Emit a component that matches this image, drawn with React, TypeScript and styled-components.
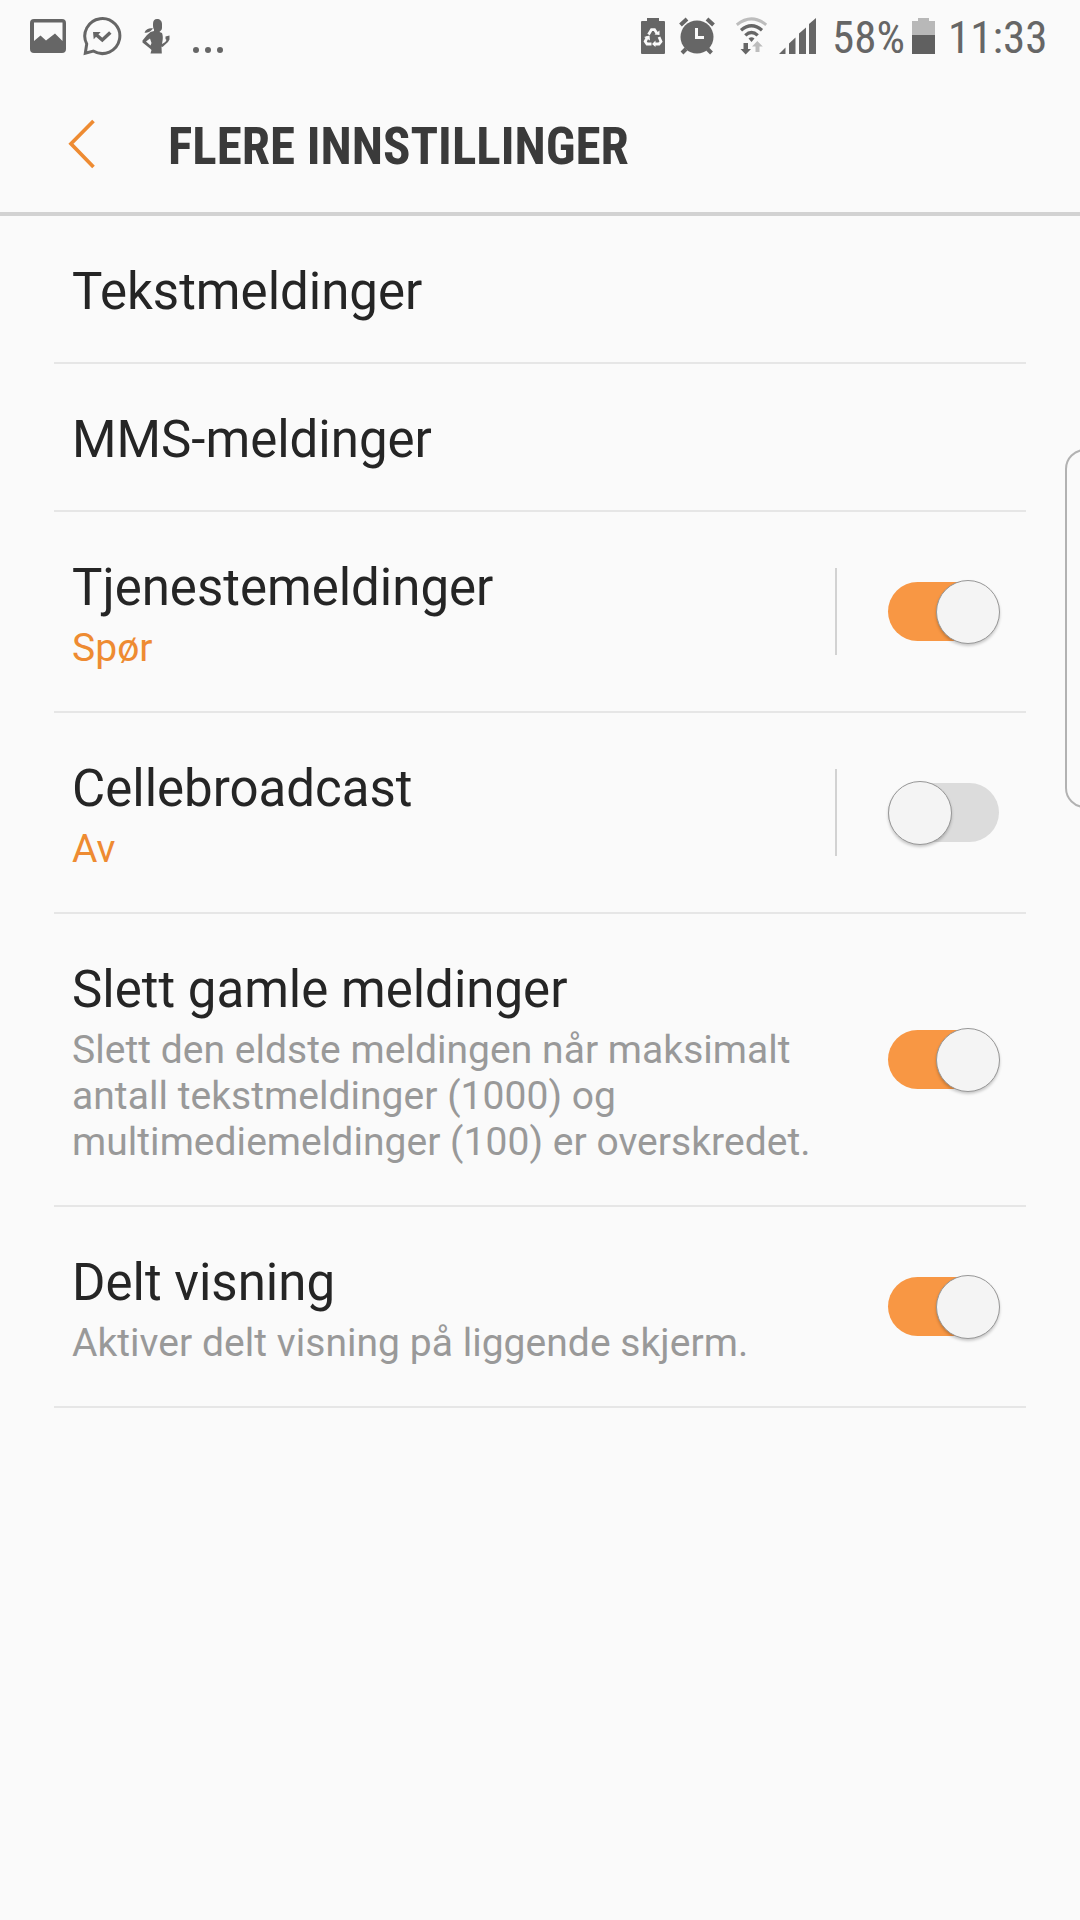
import React, { useState } from "react";
import styled, { createGlobalStyle } from "styled-components";

const GlobalStyle = createGlobalStyle`
  * { box-sizing: border-box; }
  body {
    margin: 0;
    background: #fafafa;
    font-family: Roboto, "Noto Sans", sans-serif;
  }
`;

const Screen = styled.div`
  position: relative;
  width: 1080px;
  height: 1920px;
  overflow: hidden;
  background: #fafafa;
`;

const StatusBar = styled.div`
  display: flex;
  justify-content: space-between;
  height: 72px;
  padding: 0 35px 0 30px;
  color: #666;
`;

const StatusGroup = styled.div`
  display: flex;
  align-items: flex-start;
`;

const Glyph = styled.svg<{ $gap?: number }>`
  display: block;
  flex: none;
  height: 72px;
  margin-right: ${(p) => p.$gap ?? 0}px;
`;

const StatusText = styled.span<{ $width: number; $gap?: number }>`
  width: ${(p) => p.$width}px;
  margin-right: ${(p) => p.$gap ?? 0}px;
  padding-top: 11px;
  font-family: "Roboto Condensed", Roboto, sans-serif;
  font-stretch: condensed;
  font-size: 45px;
  line-height: 54px;
  white-space: nowrap;
`;

const Header = styled.header`
  display: flex;
  align-items: flex-start;
  height: 144px;
  padding-left: 68px;
  border-bottom: 4px solid #d2d2d2;
`;

const BackButton = styled.button`
  width: 100px;
  height: 140px;
  padding: 0;
  border: 0;
  background: none;
  svg { display: block; }
`;

const Title = styled.h1`
  margin: 0;
  padding-top: 44px;
  color: #3a3a3a;
  font-family: "Roboto Condensed", Roboto, sans-serif;
  font-stretch: condensed;
  font-weight: 700;
  font-size: 51px;
  line-height: 61px;
  white-space: nowrap;
`;

const List = styled.main`
  padding: 0 54px;
`;

const Row = styled.div`
  display: flex;
  align-items: center;
  border-bottom: 2px solid #e6e6e6;
  padding-right: 26px;
`;

const RowText = styled.div`
  flex: 1;
  padding: 46px 0 40px 18px;
`;

const RowTitle = styled.div`
  color: #252525;
  font-size: 51px;
  line-height: 60px;
`;

const RowDetail = styled.div<{ $accent?: boolean }>`
  margin-top: 7px;
  color: ${(p) => (p.$accent ? "#ee8b32" : "#999")};
  font-size: 39px;
  line-height: 46px;
  letter-spacing: 0.04px;
  white-space: pre-line;
`;

const Separator = styled.div`
  width: 2px;
  height: 87px;
  margin-right: 51px;
  background: #d2d2d2;
`;

const Track = styled.button<{ $on: boolean }>`
  position: relative;
  flex: none;
  width: 112px;
  height: 64px;
  padding: 0;
  border: 0;
  background: none;
  &::before {
    content: "";
    position: absolute;
    left: 0;
    top: 2px;
    width: 111px;
    height: 59px;
    border-radius: 30px;
    background: ${(p) => (p.$on ? "#f89744" : "#dcdcdc")};
  }
`;

const Thumb = styled.span<{ $on: boolean }>`
  position: absolute;
  top: 0;
  left: ${(p) => (p.$on ? 48 : 0)}px;
  width: 64px;
  height: 64px;
  border: 1px solid #979797;
  border-radius: 50%;
  background: #f4f4f4;
  box-shadow: 0 2px 3px rgba(0, 0, 0, 0.2);
`;

const EdgeHandle = styled.div`
  position: absolute;
  left: 1065px;
  top: 449px;
  width: 40px;
  height: 359px;
  border: 2px solid #b2b2b2;
  border-radius: 20px;
`;

function Switch({ initial }: { initial: boolean }) {
  const [on, setOn] = useState(initial);
  return (
    <Track $on={on} role="switch" aria-checked={on} onClick={() => setOn(!on)}>
      <Thumb $on={on} />
    </Track>
  );
}

const PictureIcon = () => (
  <Glyph width="36" viewBox="0 0 36 72" $gap={16}>
    <path fill="#666" fillRule="evenodd" d="M4 19H32Q36 19 36 23V49Q36 53 32 53H4Q0 53 0 49V23Q0 19 4 19ZM4 22.500V41L10.500 35.500L16 40.500L25 33.500L32.500 41V22.500Z" />
  </Glyph>
);

const ChatIcon = () => (
  <Glyph width="40" viewBox="0 0 40 72" $gap={20}>
    <path fill="none" stroke="#666" strokeWidth="3" d="M4.700 43.900A17.500 17.500 0 1 1 11.300 51L3.300 53.200Z" />
    <path fill="none" stroke="#666" strokeWidth="3.500" d="M14 34.500L20.300 40L28.300 32.500" />
    <path fill="#666" d="M11 32H18.700L11.700 39.300Z" />
  </Glyph>
);

const PersonIcon = () => (
  <Glyph width="28" viewBox="0 0 28 72" $gap={23}>
    <path fill="#666" d="M11 24C11 20.500 12.500 19 15 19C18 19 20 21 20 24V28C20 30.500 18 31 17.500 32L20 33C21 36 21 38 20.500 41L20 44L23.300 42L24.500 40L23.500 39V36.500L27.500 35.500V39.500L26 42L20.500 47L19.500 46.500L19.800 53.500H8.500L9.500 50L8 48.500L0.500 42.500V40.500L5 35L8.500 32L12 31V29.500C11 28.500 11 26 11 24ZM8 38.500L4 41.500L8.500 45.500L9.500 43Z" />
    <path fill="#666" d="M2.500 32.500C4 28.500 8 28 11 28.500C9 31 6 33.500 2.500 32.500Z" />
  </Glyph>
);

const DotsIcon = () => (
  <Glyph width="30" viewBox="0 0 30 72" fill="#666">
    <circle cx="3" cy="50" r="3" />
    <circle cx="15" cy="50" r="3" />
    <circle cx="27" cy="50" r="3" />
  </Glyph>
);

const RecycleBatteryIcon = () => (
  <Glyph width="24" viewBox="0 0 24 72" $gap={14}>
    <path fill="#666" d="M6 18H18V21H23Q24 21 24 22V53Q24 54 23 54H1Q0 54 0 53V22Q0 21 1 21H6Z" />
    <g fill="none" stroke="#fafafa" strokeWidth="2.800">
      <path d="M7.500 34.500L10.500 29.600H13.500L16 33.500" />
      <path d="M18 37L20 41.500L18 44H13.500" />
      <path d="M10.500 44H6L4.200 41.500L6.500 37" />
    </g>
    <path fill="#fafafa" d="M13.500 34.500L18.500 35V30.500ZM14.500 40.500V47L11 44ZM3 37L8.500 35.500L9 40.500Z" />
  </Glyph>
);

const AlarmIcon = () => (
  <Glyph width="36" viewBox="0 0 36 72" $gap={21}>
    <circle cx="18" cy="37" r="16.500" fill="#666" />
    <path fill="none" stroke="#666" strokeWidth="4" d="M1.500 25L8 19M28 19L34.500 25M7 49L3 53M28.500 49L32.500 53" />
    <path fill="none" stroke="#fafafa" strokeWidth="3" d="M17.500 28V37.500H25" />
  </Glyph>
);

const WifiIcon = () => (
  <Glyph width="32" viewBox="0 0 32 72" $gap={11}>
    <g fill="none" strokeWidth="3">
      <path stroke="#bdbdbd" d="M0.800 24.800Q15.500 13 30.200 24.800" />
      <path stroke="#666" strokeWidth="3.300" d="M5 30.200Q15.500 21.300 26 30.200" />
      <path stroke="#666" strokeWidth="3.300" d="M9.300 35.400Q15.500 29.500 21.700 35.400" />
    </g>
    <path fill="#666" d="M12.500 38.500Q15.500 36 18.500 38.500L15.500 42Z" />
    <path fill="#666" d="M7.500 43H12V49H15L9.700 54.500L4.500 49H7.500Z" />
    <path fill="#bdbdbd" d="M19.500 52V46.500H16L21.300 41L26.800 46.500H23.500V52Z" />
  </Glyph>
);

const SignalIcon = () => (
  <Glyph width="37" viewBox="0 0 37 72" $gap={16} fill="#666">
    <path d="M0 54L6.500 47.500V54Z" />
    <path d="M10 54V43.500L16.500 37.500V54Z" />
    <path d="M20 54V33.500L27 27.500V54Z" />
    <path d="M30 54V24L37 18V54Z" />
  </Glyph>
);

const BatteryIcon = () => (
  <Glyph width="23" viewBox="0 0 23 72" $gap={13}>
    <path fill="#b8b8b8" d="M6 18H17V21H23V35H0V21H6Z" />
    <path fill="#606060" d="M0 35H23V54H0Z" />
  </Glyph>
);

interface Setting {
  title: string;
  detail?: string;
  accent?: boolean;
  on?: boolean;
}

const settings: Setting[] = [
  { title: "Tekstmeldinger" },
  { title: "MMS-meldinger" },
  { title: "Tjenestemeldinger", detail: "Spør", accent: true, on: true },
  { title: "Cellebroadcast", detail: "Av", accent: true, on: false },
  {
    title: "Slett gamle meldinger",
    detail:
      "Slett den eldste meldingen når maksimalt\nantall tekstmeldinger (1000) og\nmultimediemeldinger (100) er overskredet.",
    on: true,
  },
  { title: "Delt visning", detail: "Aktiver delt visning på liggende skjerm.", on: true },
];

export default function App() {
  return (
    <Screen>
      <GlobalStyle />
      <StatusBar>
        <StatusGroup>
          <PictureIcon />
          <ChatIcon />
          <PersonIcon />
          <DotsIcon />
        </StatusGroup>
        <StatusGroup>
          <RecycleBatteryIcon />
          <AlarmIcon />
          <WifiIcon />
          <SignalIcon />
          <StatusText $width={70} $gap={10}>58%</StatusText>
          <BatteryIcon />
          <StatusText $width={97}>11:33</StatusText>
        </StatusGroup>
      </StatusBar>
      <Header>
        <BackButton aria-label="Tilbake">
          <svg width="30" height="140" viewBox="0 0 30 140">
            <path d="M25.500 49L3 71.700L25.500 95" fill="none" stroke="#ee8b32" strokeWidth="3.700" />
          </svg>
        </BackButton>
        <Title>FLERE INNSTILLINGER</Title>
      </Header>
      <List>
        {settings.map((s) => (
          <Row key={s.title}>
            <RowText>
              <RowTitle>{s.title}</RowTitle>
              {s.detail && <RowDetail $accent={s.accent}>{s.detail}</RowDetail>}
            </RowText>
            {s.accent && <Separator />}
            {s.on !== undefined && <Switch initial={s.on} />}
          </Row>
        ))}
      </List>
      <EdgeHandle />
    </Screen>
  );
}
